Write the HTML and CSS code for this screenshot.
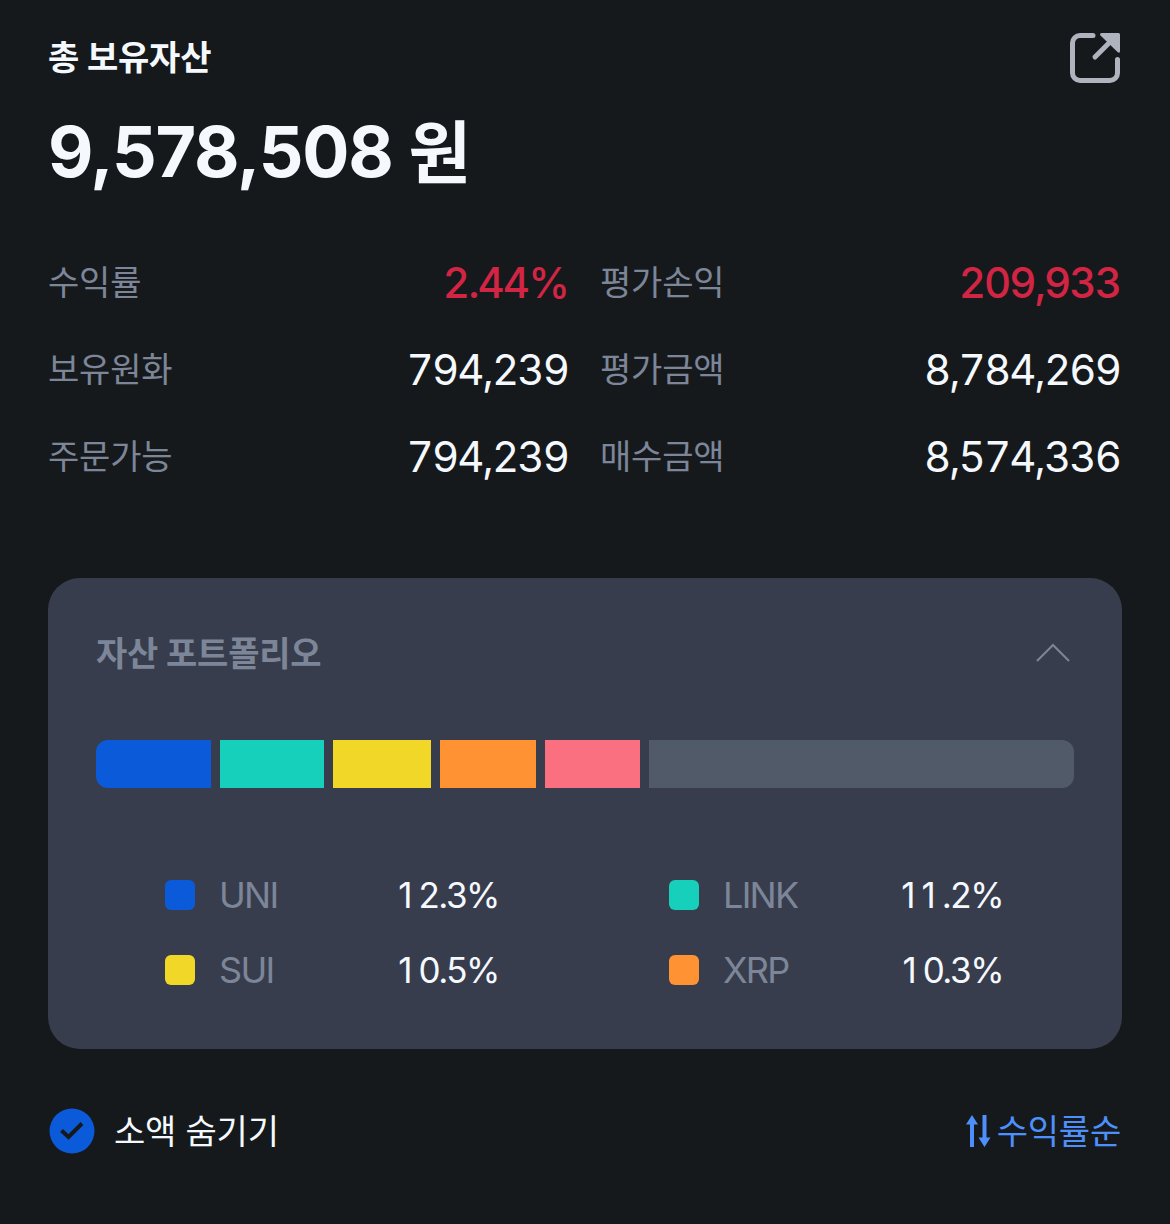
FILE: index.html
```html
<!DOCTYPE html>
<html lang="ko">
  <head>
    <meta charset="UTF-8" />
    <meta name="viewport" content="width=device-width, initial-scale=1.0" />
    <title>총 보유자산</title>
    <link rel="stylesheet" href="styles.css">
  </head>
  <body>
    <div class="container">
      <header class="header flex">
        <h1>총 보유자산</h1>
        <a class="share" href="#" aria-label="공유">
          <svg width="52" height="52" viewBox="0 0 52 52" fill="none">
            <path d="M24 3.500H11a7.500 7.500 0 0 0-7.500 7.500V41a7.500 7.500 0 0 0 7.500 7.500H41a7.500 7.500 0 0 0 7.500-7.500V27.500" stroke="#afb3bd" stroke-width="5" stroke-linecap="round" />
            <path d="M26 25 41 10" stroke="#afb3bd" stroke-width="5" stroke-linecap="round" />
            <path d="M33 1H49.500Q51 1 51 2.500V19Q51 22 48.500 20L31.500 3.500Q30 1 33 1Z" fill="#afb3bd" />
          </svg>
        </a>
      </header>
      <p class="total flex"><span class="num">9,578,508</span><span class="won">원</span></p>

      <dl class="stats">
        <div class="stat flex"><dt>수익률</dt><dd class="up">2.44%</dd></div>
        <div class="stat flex"><dt>평가손익</dt><dd class="up">209,933</dd></div>
        <div class="stat flex"><dt>보유원화</dt><dd>794,239</dd></div>
        <div class="stat flex"><dt>평가금액</dt><dd>8,784,269</dd></div>
        <div class="stat flex"><dt>주문가능</dt><dd>794,239</dd></div>
        <div class="stat flex"><dt>매수금액</dt><dd>8,574,336</dd></div>
      </dl>

      <section class="portfolio">
        <div class="portfolio-title flex">
          <h2>자산 포트폴리오</h2>
          <svg width="36" height="22" viewBox="0 0 36 22" fill="none">
            <path d="M2 19 18 3 34 19" stroke="#7c8698" stroke-width="2" />
          </svg>
        </div>
        <div class="bar">
          <span class="uni" style="flex-grow: 115"></span>
          <span class="link" style="flex-grow: 104"></span>
          <span class="sui" style="flex-grow: 98"></span>
          <span class="xrp" style="flex-grow: 96"></span>
          <span class="fifth" style="flex-grow: 95"></span>
          <span class="etc" style="flex-grow: 425"></span>
        </div>
        <ul class="legend">
          <li class="flex"><i class="uni"></i><span>UNI</span><b><em>1</em>2.3%</b></li>
          <li class="flex"><i class="link"></i><span>LINK</span><b><em>11</em>.2%</b></li>
          <li class="flex"><i class="sui"></i><span>SUI</span><b><em>1</em>0.5%</b></li>
          <li class="flex"><i class="xrp"></i><span>XRP</span><b><em>1</em>0.3%</b></li>
        </ul>
      </section>

      <footer class="footer flex">
        <div class="hide-small flex">
          <svg width="46" height="46" viewBox="0 0 46 46" fill="none">
            <circle cx="23" cy="23" r="22.500" fill="#0b5ad9" />
            <path d="M12.500 22.500 19.500 29 33 15.500" stroke="#16191c" stroke-width="4" />
          </svg>
          <span>소액 숨기기</span>
        </div>
        <div class="sort flex">
          <svg width="26" height="34" viewBox="0 0 26 34">
            <path d="M6 1 12 10.500H8V33H4V10.500H0Z" fill="#4d90fb" />
            <path d="M18.500 33 12.500 23.500H16.500V1H20.500V23.500H24.500Z" fill="#4d90fb" />
          </svg>
          <span>수익률순</span>
        </div>
      </footer>
    </div>
  </body>
</html>
```
FILE: styles.css
```css
* {
  margin: 0;
  padding: 0;
  box-sizing: border-box;
}

body {
  background: #16191c;
  color: #f5f9fe;
  font-family: Inter, "Noto Sans CJK KR", sans-serif;
  font-size: 34px;
  letter-spacing: -0.2px;
}

.flex {
  display: flex;
  align-items: center;
}

.container {
  width: 1170px;
  min-height: 1224px;
  padding: 32px 48px 0;
}

.header {
  height: 52px;
  justify-content: space-between;
}

.header h1 {
  font-size: 34px;
  line-height: 52px;
  font-weight: 700;
}

.share {
  height: 52px;
  margin-right: 1px;
}

.total {
  height: 80px;
  margin-top: 28px;
  line-height: 80px;
  font-size: 70px;
  font-weight: 700;
  white-space: nowrap;
}

.total .num {
  letter-spacing: -1.2px;
}

.total .won {
  margin-left: 16px;
  padding-top: 2px;
  font-size: 68px;
}

.stats {
  display: grid;
  grid-template-columns: 521px 521px;
  column-gap: 31px;
  grid-auto-rows: 87px;
  margin-top: 47px;
}

.stat {
  justify-content: space-between;
}

.stat dt {
  line-height: 46px;
}

.stat dt,
.portfolio-title h2,
.legend span {
  color: #7c8698;
}

.stat dd {
  font-size: 42px;
  letter-spacing: -1.9px;
  margin-right: 1px;
  font-variant-numeric: tabular-nums;
}

.stat .up {
  color: #d22443;
  font-weight: 500;
}

.portfolio {
  width: 1074px;
  height: 471px;
  margin-top: 78px;
  padding: 48px;
  border-radius: 32px;
  background: #373d4d;
}

.portfolio-title {
  height: 54px;
  justify-content: space-between;
  padding-right: 3px;
}

.portfolio-title h2 {
  padding-bottom: 4px;
  font-size: 34px;
  font-weight: 700;
}

.bar {
  display: flex;
  gap: 9px;
  height: 48px;
  margin-top: 60px;
  border-radius: 12px;
  overflow: hidden;
}

.bar span {
  flex-basis: 0;
}

.uni {
  background: #0b5ad9;
}

.link {
  background: #16d0bb;
}

.sui {
  background: #f0d728;
}

.xrp {
  background: #ff9233;
}

.fifth {
  background: #fb7081;
}

.etc {
  background: #515a69;
}

.legend {
  display: grid;
  grid-template-columns: 333px 333px;
  grid-auto-rows: 75px;
  column-gap: 171px;
  margin: 69px 0 0 69px;
  list-style: none;
  font-size: 36px;
}

.legend i {
  width: 30px;
  height: 30px;
  margin-right: 24px;
  border-radius: 6px;
}

.legend span {
  letter-spacing: -1.7px;
}

.legend b {
  margin: 0 -1px 0 auto;
  font-size: 35px;
  font-weight: 400;
  letter-spacing: -1.5px;
}

/* gives the narrow 1 the width of the other digits */
.legend em {
  font-style: normal;
  letter-spacing: 6px;
}

.footer {
  height: 46px;
  margin-top: 59px;
  justify-content: space-between;
}

.footer span {
  padding-bottom: 3px;
}

.hide-small {
  gap: 19px;
  padding-left: 1px;
}

.sort {
  gap: 5px;
  padding-right: 1px;
  color: #4d90fb;
}
```
